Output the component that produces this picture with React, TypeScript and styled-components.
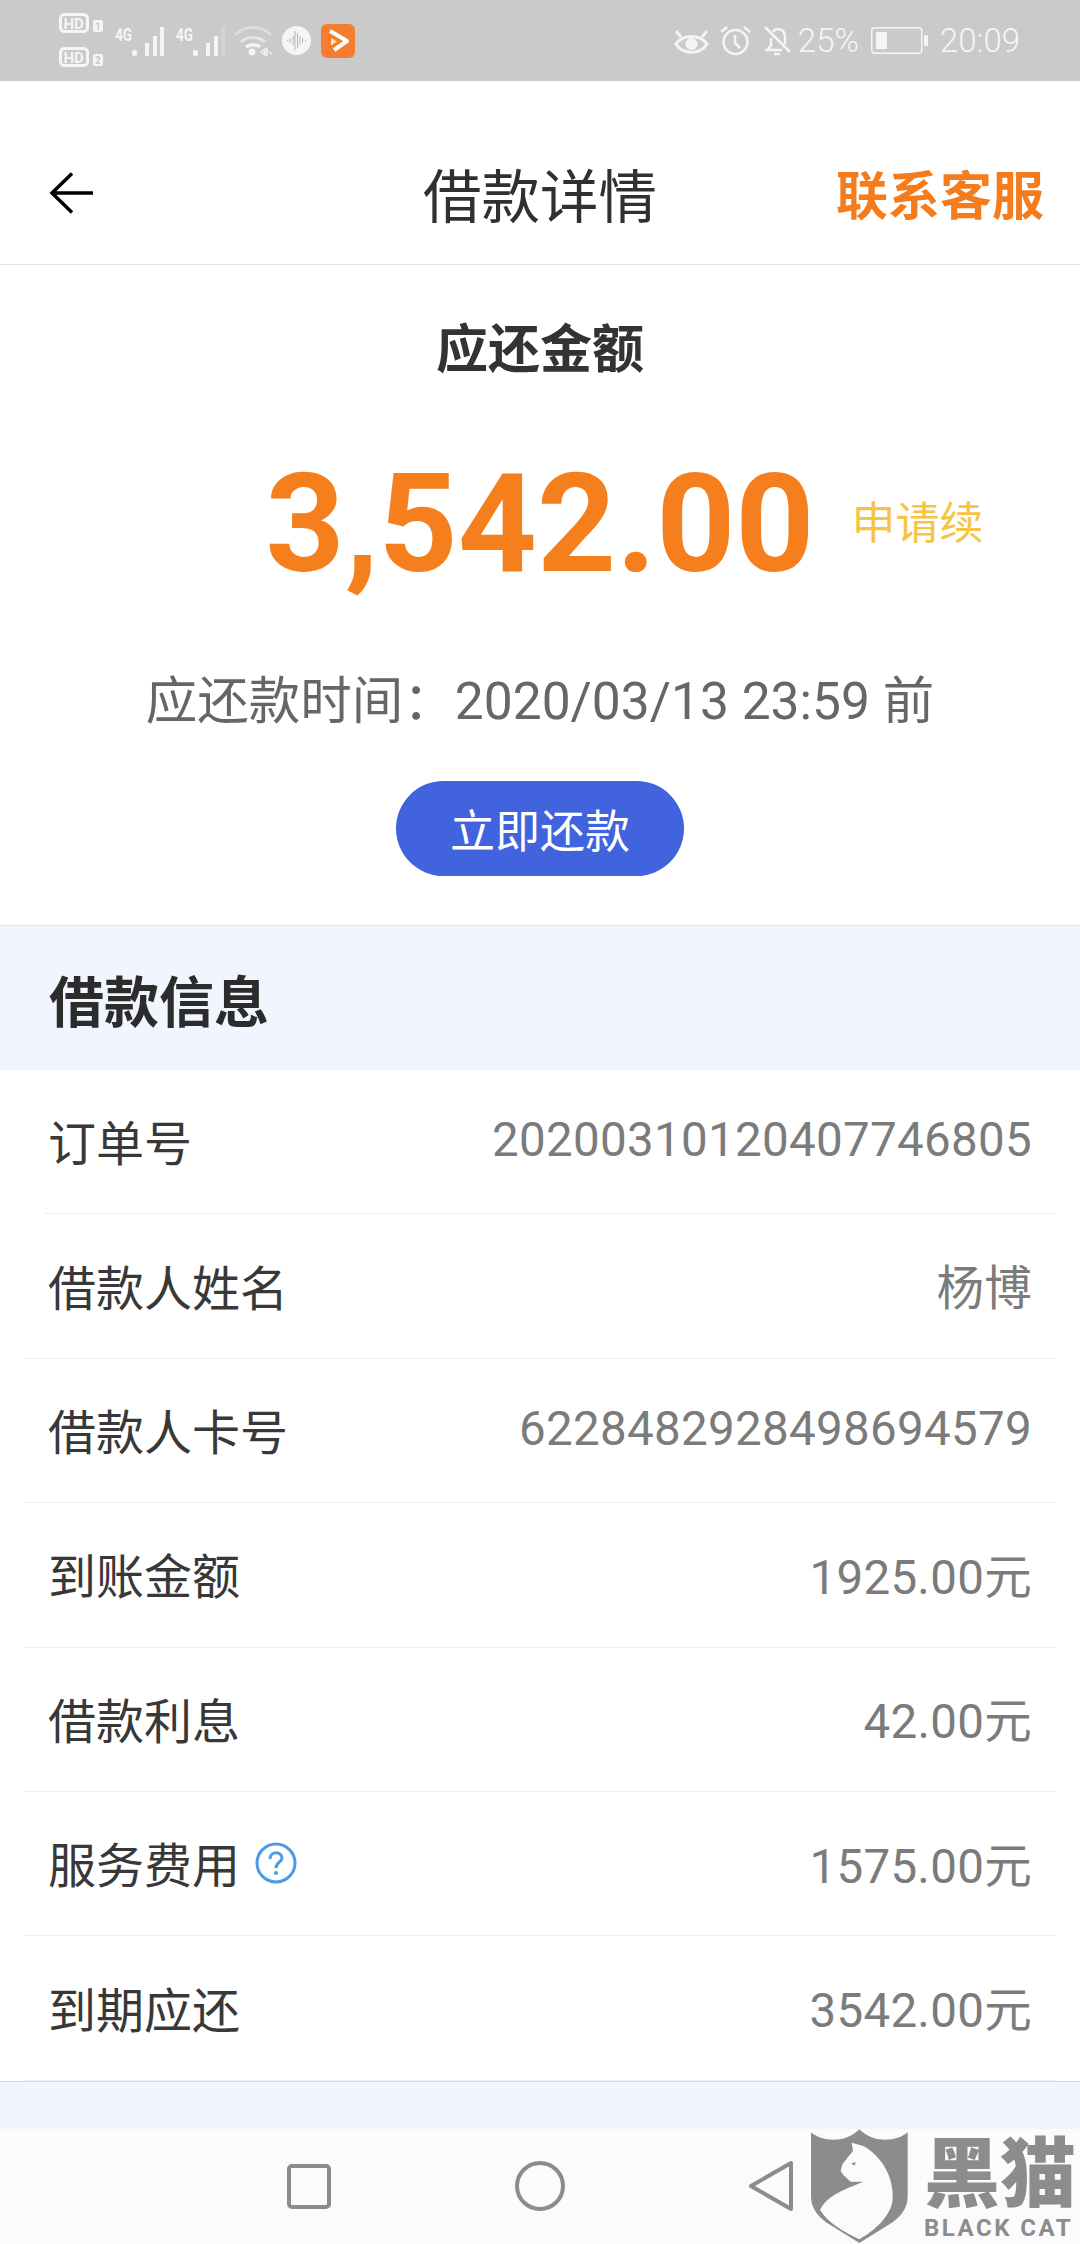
import styled, { createGlobalStyle } from "styled-components";

const cjk = `"Roboto", "Noto Sans CJK SC", sans-serif`;
const statusWhite = "#f5f5f5";

const GlobalStyle = createGlobalStyle`
  html, body {
    margin: 0;
    padding: 0;
    background: #fff;
    font-family: ${cjk};
  }
`;

const Page = styled.div`
  position: relative;
  width: 1080px;
  height: 2244px;
  overflow: hidden;
  display: flex;
  flex-direction: column;
  background: #fff;
`;

const StatusBar = styled.div`
  height: 81px;
  background: #cacaca;
  display: flex;
  justify-content: space-between;
  align-items: center;
  padding: 0 60px 0 59px;
  color: ${statusWhite};
  flex-shrink: 0;
`;

const StatusGroup = styled.div`
  display: flex;
  align-items: center;
`;

const StatusIcon = styled.svg<{ $ml?: number }>`
  display: block;
  flex-shrink: 0;
  margin-left: ${(p) => p.$ml ?? 0}px;
`;

const StatusText = styled.span<{ $ml: number }>`
  font-size: 33px;
  font-weight: 300;
  margin-left: ${(p) => p.$ml}px;
  line-height: 40px;
`;

const Header = styled.header`
  height: 184px;
  box-sizing: border-box;
  border-bottom: 1px solid #e0e0e0;
  display: grid;
  grid-template-columns: 1fr auto 1fr;
  align-items: center;
  padding: 40px 36px 0;
  flex-shrink: 0;
`;

const BackButton = styled.div`
  display: flex;
  align-items: center;
  margin-left: 13px;
`;

const HeaderTitle = styled.h1`
  margin: 0;
  font-size: 58.5px;
  font-weight: 400;
  color: #2f3033;
`;

const HeaderLink = styled.div`
  justify-self: end;
  font-size: 52px;
  font-weight: 700;
  color: #f47c1c;
`;

const Summary = styled.section`
  height: 660px;
  display: flex;
  flex-direction: column;
  align-items: center;
  flex-shrink: 0;
`;

const SummaryLabel = styled.div`
  margin-top: 51px;
  line-height: 70px;
  font-size: 52px;
  font-weight: 700;
  color: #333;
`;

const AmountRow = styled.div`
  position: relative;
  margin-top: 58px;
  line-height: 160px;
  height: 160px;
`;

const Amount = styled.div`
  font-family: "Roboto", sans-serif;
  font-size: 138px;
  font-weight: 700;
  color: #f47f1c;
`;

const Renew = styled.div`
  position: absolute;
  left: 100%;
  top: 0;
  margin-left: 37px;
  font-size: 44px;
  white-space: nowrap;
  color: #f6c445;
`;

const DueDate = styled.div`
  margin-top: 63px;
  line-height: 70px;
  font-size: 51.5px;
  color: #666;
`;

const PayButton = styled.div`
  margin-top: 44px;
  width: 288px;
  height: 95px;
  border-radius: 48px;
  background: #4263de;
  color: #fff;
  font-size: 45px;
  display: flex;
  align-items: center;
  justify-content: center;
`;

const SectionBand = styled.div`
  height: 145px;
  box-sizing: border-box;
  border-top: 1px solid #e3e6ec;
  background: #f1f5fd;
  display: flex;
  align-items: center;
  padding-left: 49px;
  font-size: 55px;
  font-weight: 700;
  color: #2c2c2c;
  flex-shrink: 0;
`;

const Row = styled.div<{ $first?: boolean }>`
  height: 144.4px;
  box-sizing: border-box;
  margin-left: ${(p) => (p.$first ? 44 : 24)}px;
  margin-right: 24px;
  padding: 0 24px 3px ${(p) => (p.$first ? 4 : 24)}px;
  border-bottom: 1px solid #eeeeee;
  display: flex;
  align-items: center;
  justify-content: space-between;
  flex-shrink: 0;
  &:last-of-type {
    border-bottom: none;
  }
`;

const RowLabel = styled.div`
  display: flex;
  align-items: center;
  font-size: 48px;
  color: #383838;
`;

const RowValue = styled.div`
  font-size: 47.5px;
  color: #7b7b7b;
  letter-spacing: 0.3px;
`;

const HelpIcon = styled.svg`
  margin-left: 15px;
  margin-top: 2px;
`;

const FooterBand = styled.div`
  height: 48px;
  border-top: 1px solid #d6dbe2;
  box-sizing: border-box;
  background: #f1f5fd;
  flex-shrink: 0;
`;

const NavBar = styled.nav`
  flex: 1;
  background: #fbfbfb;
  display: grid;
  grid-template-columns: repeat(3, 1fr);
  padding: 0 194px;
  align-items: center;
`;

const NavItem = styled.div`
  display: flex;
  justify-content: center;
`;

const Watermark = styled.div`
  position: absolute;
  left: 800px;
  top: 2120px;
  display: flex;
  color: #8c8c8c;
`;

const WatermarkText = styled.div`
  margin-left: 7px;
  margin-top: 17px;
  display: flex;
  flex-direction: column;
`;

const WatermarkName = styled.div`
  font-size: 76px;
  line-height: 76px;
  font-weight: 900;
  white-space: nowrap;
`;

const WatermarkLatin = styled.div`
  font-family: "Roboto", sans-serif;
  font-size: 24px;
  font-weight: 700;
  line-height: 24px;
  margin-top: 3px;
  letter-spacing: 2.5px;
  white-space: nowrap;
`;

const rows = [
  { label: "订单号", value: "20200310120407746805" },
  { label: "借款人姓名", value: "杨博" },
  { label: "借款人卡号", value: "6228482928498694579" },
  { label: "到账金额", value: "1925.00元" },
  { label: "借款利息", value: "42.00元" },
  { label: "服务费用", value: "1575.00元", help: true },
  { label: "到期应还", value: "3542.00元" },
];

const HdIcon = () => (
  <StatusIcon width="45" height="56" viewBox="0 0 45 56" fill="none">
    <g stroke={statusWhite} strokeWidth="3">
      <rect x="1.5" y="1.5" width="27" height="17" rx="4" />
      <rect x="1.5" y="35.5" width="27" height="17" rx="4" />
    </g>
    <g fill={statusWhite} fontFamily="Roboto, sans-serif" fontWeight="700" fontSize="15">
      <text x="4.5" y="15.5">HD</text>
      <text x="4.5" y="49.5">HD</text>
      <rect x="34" y="7" width="10" height="12" rx="2" />
      <rect x="34" y="41" width="10" height="12" rx="2" />
    </g>
    <g fill="#cacaca" fontFamily="Roboto, sans-serif" fontWeight="700" fontSize="10">
      <text x="36" y="17">1</text>
      <text x="36" y="51">2</text>
    </g>
  </StatusIcon>
);

const SignalIcon = ({ ml, faintLast }: { ml: number; faintLast?: boolean }) => (
  <StatusIcon $ml={ml} width="49" height="34" viewBox="0 0 49 34" fill={statusWhite}>
    <text
      x="0"
      y="17"
      fontSize="18"
      fontWeight="700"
      fontFamily="Roboto, sans-serif"
      textLength="17"
      lengthAdjust="spacingAndGlyphs"
    >
      4G
    </text>
    <rect x="17" y="26" width="5" height="6" rx="2" />
    <rect x="30" y="19" width="4" height="13" />
    <rect x="38" y="12" width="4" height="20" />
    <rect x="45" y="3" width="4" height="29" opacity={faintLast ? 0.25 : 1} />
  </StatusIcon>
);

const WifiIcon = () => (
  <StatusIcon $ml={9} width="38" height="30" viewBox="0 0 38 30" fill="none" stroke={statusWhite}>
    <path d="M1 9c10-10 26-10 36 0" strokeWidth="3" opacity="0.45" />
    <path d="M7 16c7-6 17-6 24 0" strokeWidth="3" opacity="0.6" />
    <path d="M12 21c4-3 10-3 14 0" strokeWidth="3.5" />
    <circle cx="18" cy="26" r="3.5" fill={statusWhite} stroke="none" />
    <path d="M27 26l4-3v6zM33 22v8M35 26l3 2" strokeWidth="1.5" />
  </StatusIcon>
);

const VoiceIcon = () => (
  <StatusIcon $ml={10} width="29" height="29" viewBox="0 0 29 29" fill="none">
    <circle cx="14.5" cy="14.5" r="14.5" fill={statusWhite} />
    <path
      d="M5 14.5h1M8 12v5M11 10v9M13 5v19M15.5 7v15M18 10v9M20.5 12v5M23 14.5h1"
      stroke="#b4b4b4"
      strokeWidth="1"
    />
  </StatusIcon>
);

const AppIcon = () => (
  <StatusIcon $ml={10} width="34" height="34" viewBox="0 0 34 34" fill="none">
    <rect width="34" height="34" rx="6" fill="#f47d30" />
    <path d="M9 7l17 10-13 9" stroke="#fff" strokeWidth="4" strokeLinejoin="round" />
    <path d="M10 14l6 3.5-6 4z" fill="#fde0bd" />
  </StatusIcon>
);

const EyeIcon = () => (
  <StatusIcon width="35" height="30" viewBox="0 0 35 30" fill="none" stroke={statusWhite}>
    <path d="M2 18c7-10 24-10 31 0-7 11-24 11-31 0z" strokeWidth="3" />
    <circle cx="17.5" cy="18" r="6" fill={statusWhite} stroke="none" />
    <path d="M2 5l5 6M33 5l-5 6" strokeWidth="3" />
  </StatusIcon>
);

const AlarmIcon = () => (
  <StatusIcon $ml={11} width="31" height="31" viewBox="0 0 31 31" fill="none" stroke={statusWhite} strokeWidth="2.5">
    <circle cx="15.5" cy="17" r="12" />
    <path d="M15 10v8l5 5M1 7l6-5M30 7l-6-5" />
  </StatusIcon>
);

const BellOffIcon = () => (
  <StatusIcon $ml={12} width="28" height="30" viewBox="0 0 28 30" fill="none" stroke={statusWhite} strokeWidth="2.5">
    <path d="M2 24h17M6 24v-2l2-3v-7M10 6c1-2 3-3 5-3 5 0 7 4 7 9v6" />
    <path d="M2 1l25 25M11 28h6" />
  </StatusIcon>
);

const BatteryIcon = () => (
  <StatusIcon $ml={12} width="57" height="27" viewBox="0 0 57 27" fill="none">
    <rect x="0.75" y="0.75" width="50" height="25.5" rx="3" stroke={statusWhite} strokeWidth="1.5" />
    <rect x="5" y="5" width="11" height="17" fill={statusWhite} />
    <rect x="53" y="8" width="4" height="11" rx="1" fill={statusWhite} />
  </StatusIcon>
);

export default function App() {
  return (
    <Page>
      <GlobalStyle />
      <StatusBar>
        <StatusGroup>
          <HdIcon />
          <SignalIcon ml={11} />
          <SignalIcon ml={12} faintLast />
          <WifiIcon />
          <VoiceIcon />
          <AppIcon />
        </StatusGroup>
        <StatusGroup>
          <EyeIcon />
          <AlarmIcon />
          <BellOffIcon />
          <StatusText $ml={7}>25%</StatusText>
          <BatteryIcon />
          <StatusText $ml={12}>20:09</StatusText>
        </StatusGroup>
      </StatusBar>
      <Header>
        <BackButton>
          <svg width="44" height="42" viewBox="0 0 44 42" fill="none" stroke="#000" strokeWidth="3.5">
            <path d="M44 21H3M23 1.5L3 21l20 19.5" />
          </svg>
        </BackButton>
        <HeaderTitle>借款详情</HeaderTitle>
        <HeaderLink>联系客服</HeaderLink>
      </Header>
      <Summary>
        <SummaryLabel>应还金额</SummaryLabel>
        <AmountRow>
          <Amount>3,542.00</Amount>
          <Renew>申请续</Renew>
        </AmountRow>
        <DueDate>应还款时间：2020/03/13 23:59 前</DueDate>
        <PayButton>立即还款</PayButton>
      </Summary>
      <SectionBand>借款信息</SectionBand>
      {rows.map((row, i) => (
        <Row key={row.label} $first={i === 0}>
          <RowLabel>
            {row.label}
            {row.help && (
              <HelpIcon width="42" height="42" viewBox="0 0 42 42" fill="none">
                <circle cx="21" cy="21" r="19" stroke="#4a9be8" strokeWidth="3" />
                <path d="M15 17c0-8 12-8 12-1 0 4-6 4-6 10" stroke="#4a9be8" strokeWidth="3" />
                <circle cx="21" cy="31" r="2" fill="#4a9be8" />
              </HelpIcon>
            )}
          </RowLabel>
          <RowValue>{row.value}</RowValue>
        </Row>
      ))}
      <FooterBand />
      <NavBar>
        <NavItem>
          <svg width="44" height="45" viewBox="0 0 44 45" fill="none" stroke="#8c8c8c" strokeWidth="4">
            <rect x="2" y="2" width="40" height="41" rx="3" />
          </svg>
        </NavItem>
        <NavItem>
          <svg width="50" height="50" viewBox="0 0 50 50" fill="none" stroke="#8c8c8c" strokeWidth="4">
            <circle cx="25" cy="25" r="23" />
          </svg>
        </NavItem>
        <NavItem>
          <svg width="44" height="50" viewBox="0 0 44 50" fill="none" stroke="#8c8c8c" strokeWidth="4" strokeLinejoin="round">
            <path d="M42 2v46L2 25z" />
          </svg>
        </NavItem>
      </NavBar>
      <Watermark>
        <svg width="117" height="124" viewBox="0 0 351 372">
          <path
            d="M33 37C65 65 135 72 178 28c43 44 113 37 145 9v190c0 35-15 55-45 80l-100 62-100-62C48 282 33 262 33 227z"
            fill="#8c8c8c"
          />
          <path
            d="M155 68l35 10c55 30 92 95 88 160-4 50-55 95-100 120-45-22-95-50-118-88 22-45 70-60 130-85h-38l-22-20-8-12 5-20 22-28 10-12z"
            fill="#fbfbfb"
          />
          <path d="M153 130l15-3-5 10z" fill="#8c8c8c" />
        </svg>
        <WatermarkText>
          <WatermarkName>黑猫</WatermarkName>
          <WatermarkLatin>BLACK CAT</WatermarkLatin>
        </WatermarkText>
      </Watermark>
    </Page>
  );
}
